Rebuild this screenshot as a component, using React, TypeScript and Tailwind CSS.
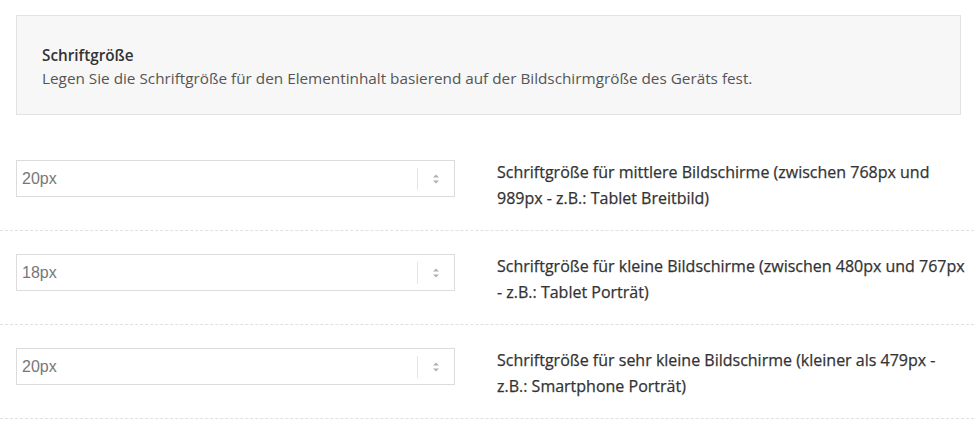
const ROWS = [
  { value: "20px", label: "Schriftgröße für mittlere Bildschirme (zwischen 768px und 989px - z.B.: Tablet Breitbild)" },
  { value: "18px", label: "Schriftgröße für kleine Bildschirme (zwischen 480px und 767px - z.B.: Tablet Porträt)" },
  { value: "20px", label: "Schriftgröße für sehr kleine Bildschirme (kleiner als 479px - z.B.: Smartphone Porträt)" },
];

function Spinner() {
  return (
    <svg width="8" height="12" viewBox="0 0 8 12" className="text-[#b0b0b0]">
      <path d="M4 1.5 L7 4.5 H1 Z" fill="currentColor" />
      <path d="M4 10.5 L7 7.5 H1 Z" fill="currentColor" />
    </svg>
  );
}

export default function App() {
  return (
    <div className="w-[974px] h-[425px] bg-white overflow-hidden pt-[15px] font-['Open_Sans',sans-serif]">
      <div className="mx-4 w-[945px] h-[100px] bg-[#f7f7f7] border border-[#e2e2e2] px-[25px] pt-[28px]">
        <div className="text-[15.3px] leading-[23px] font-semibold text-[#333]">Schriftgröße</div>
        <div className="text-[15.3px] leading-[23px] text-[#555]">
          Legen Sie die Schriftgröße für den Elementinhalt basierend auf der Bildschirmgröße des Geräts fest.
        </div>
      </div>
      <div className="mt-[22px]">
        {ROWS.map((r, i) => (
          <div key={i} className="flex items-start h-[94px] pt-[23px] border-b border-dashed border-[#e0e0e0]">
            <div className="ml-4 w-[439px] h-[37px] border border-[#dcdcdc] flex items-center">
              <span className="flex-1 pl-[5px] text-[16px] text-[#777] font-['Liberation_Sans',sans-serif]">{r.value}</span>
              <div className="w-px h-[22px] bg-[#e5e5e5]" />
              <div className="w-[36px] flex justify-center">
                <Spinner />
              </div>
            </div>
            <div className="ml-[42px] w-[470px] -mt-[1px] text-[16px] leading-[26px] font-medium text-[#333] [-webkit-text-stroke:0.25px_#333]">{r.label}</div>
          </div>
        ))}
      </div>
    </div>
  );
}
